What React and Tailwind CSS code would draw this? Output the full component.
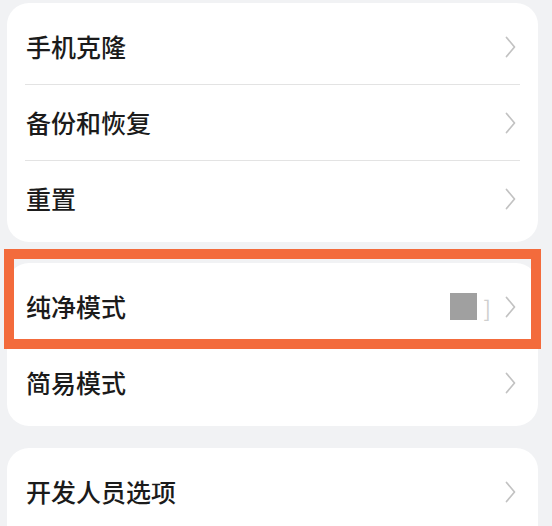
const font = { fontFamily: '"Noto Sans CJK SC", "Noto Sans", sans-serif' };

function Chevron() {
  return (
    <svg width="11" height="22" viewBox="0 0 11 22" className="shrink-0">
      <path d="M1.5 1.5 L9.5 11 L1.5 20.5" fill="none" stroke="#c2c2c2" strokeWidth="1.7" strokeLinecap="round" strokeLinejoin="round" />
    </svg>
  );
}

function Row({ label, last, children, highlight }) {
  return (
    <div className="relative">
      <div className="flex h-[75px] items-center justify-between pl-[19px] pr-[22px]">
        <span className="text-[25px] font-medium leading-none text-[#1b1b1b]">{label}</span>
        <div className="flex items-center">
          {children}
          <Chevron />
        </div>
      </div>
      {!last && <div className="mx-[18px] h-px bg-[#e3e3e3]"></div>}
      {highlight && (
        <div className="absolute -left-[3px] -right-[3px] -top-[20px] -bottom-[4px] border-[10px] border-[#f36b3c]"></div>
      )}
    </div>
  );
}

export default function App() {
  return (
    <main className="min-h-[526px] w-[552px] overflow-hidden bg-[#f1f2f4] pl-[7px] pr-[14px] pt-[3px]" style={font}>
      <section className="rounded-[22px] bg-white py-[6px]">
        <Row label="手机克隆" />
        <Row label="备份和恢复" />
        <Row label="重置" last />
      </section>

      <section className="mt-[21px] rounded-[22px] bg-white py-[6px]">
        <Row label="纯净模式" highlight>
          <div className="mr-[7px] h-[27px] w-[27px] bg-[#a0a0a0]"></div>
          <span className="mr-[14px] text-[22px] leading-none text-[#cfcfcf]">]</span>
        </Row>
        <Row label="简易模式" last />
      </section>

      <section className="mt-[22px] rounded-t-[22px] bg-white py-[6px]">
        <Row label="开发人员选项" last />
      </section>
    </main>
  );
}
